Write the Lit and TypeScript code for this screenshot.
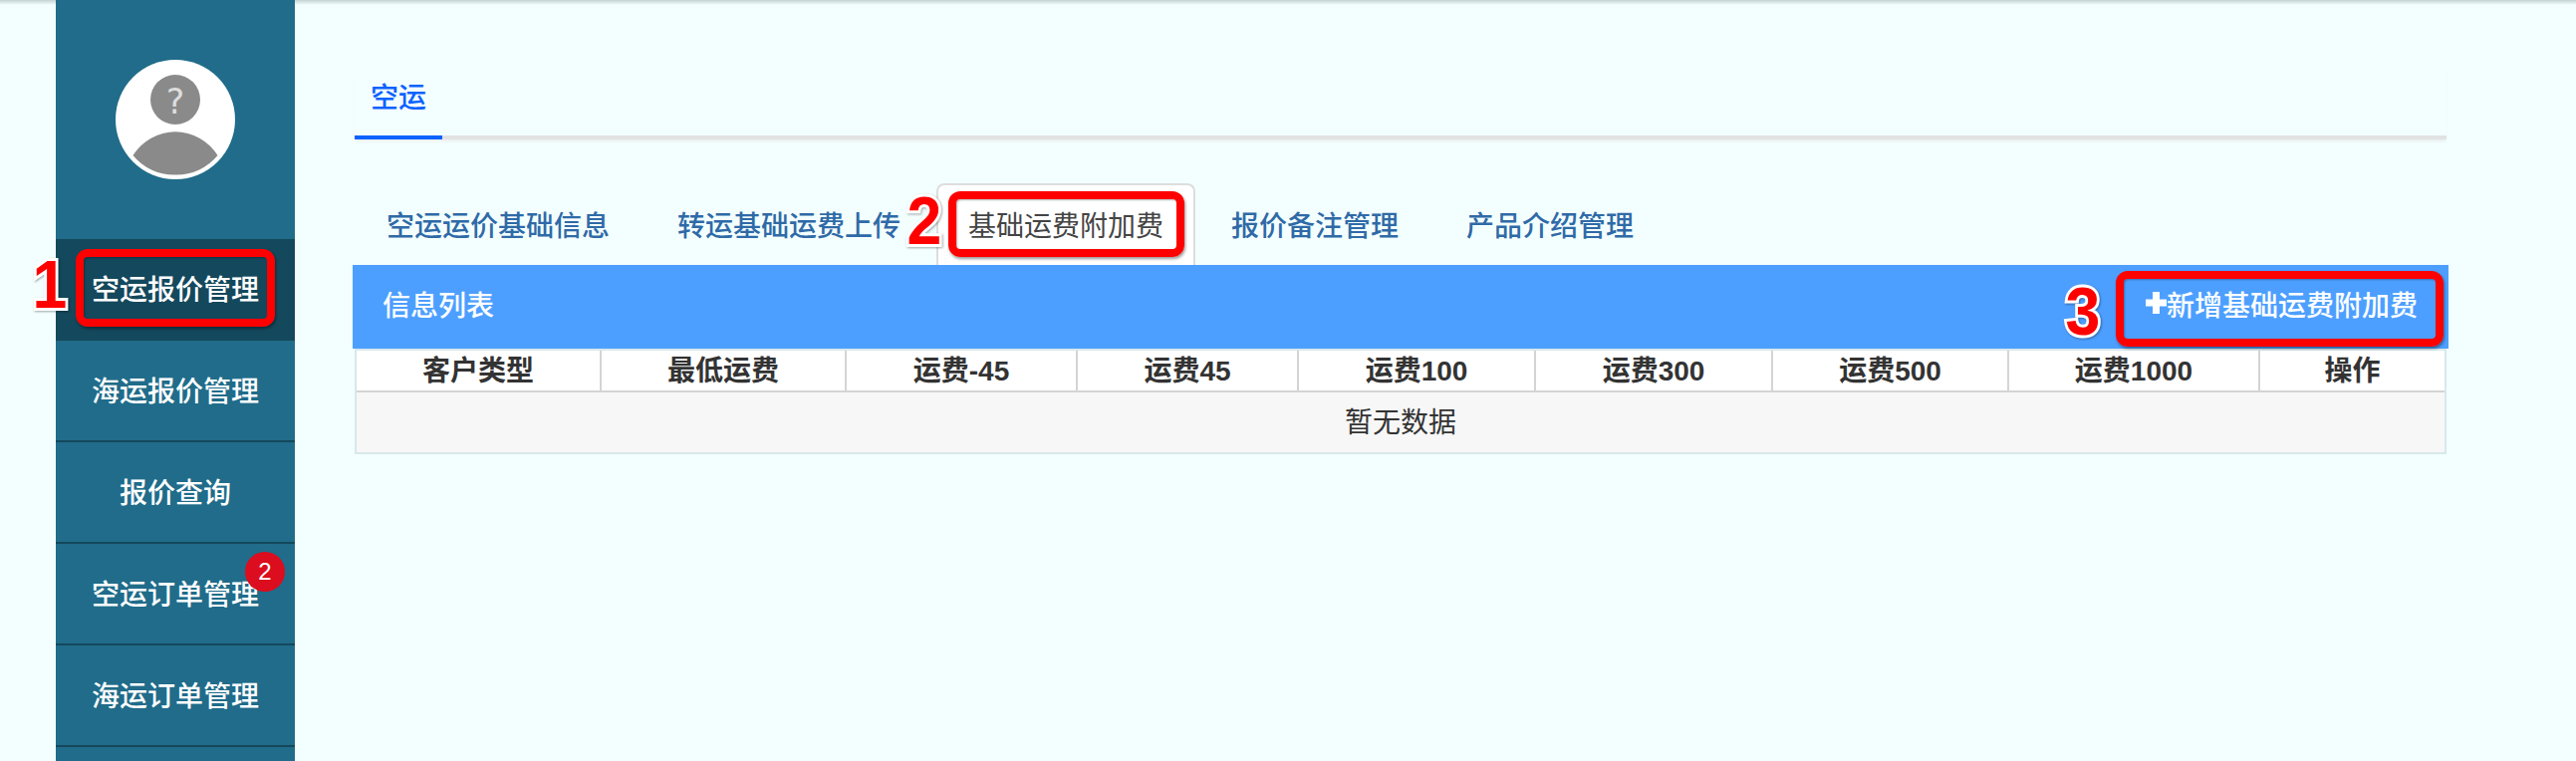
import { LitElement, html, css, svg } from "lit";
import { customElement } from "lit/decorators.js";

const NAV = [
  { label: "空运报价管理", active: true },
  { label: "海运报价管理" },
  { label: "报价查询" },
  { label: "空运订单管理", badge: 2 },
  { label: "海运订单管理" },
  { label: "" },
];
const SUBTABS = [
  { label: "空运运价基础信息" },
  { label: "转运基础运费上传" },
  { label: "基础运费附加费", active: true },
  { label: "报价备注管理" },
  { label: "产品介绍管理" },
];
const COLS = [
  { label: "客户类型", w: 246 },
  { label: "最低运费", w: 246 },
  { label: "运费-45", w: 232 },
  { label: "运费45", w: 222 },
  { label: "运费100", w: 238 },
  { label: "运费300", w: 238 },
  { label: "运费500", w: 237 },
  { label: "运费1000", w: 252 },
  { label: "操作", w: 185 },
];

const avatar = svg`<svg class="avatar" viewBox="0 0 120 120" width="120" height="120">
  <circle cx="60" cy="60" r="60" fill="#fff"></circle>
  <circle cx="60" cy="40" r="25" fill="#8a8a8a"></circle>
  <path d="M17.500 96 A50 50 0 0 1 102.500 96 A53 53 0 0 1 60 115.500 A53 53 0 0 1 17.500 96 Z" fill="#8a8a8a"></path>
  <text x="60" y="54" text-anchor="middle" font-family="'DejaVu Sans', sans-serif" font-size="35" fill="#ddd">?</text>
</svg>`;

@customElement("app-root")
export class AppRoot extends LitElement {
  static styles = css`
    :host {
      display: block;
      position: relative;
      width: 2586px;
      height: 764px;
      overflow: hidden;
      background: linear-gradient(#c4d2d2, #f3ffff 5px);
      font-family: "Liberation Sans", "Noto Sans CJK SC", sans-serif;
      font-size: 28px;
      font-weight: 500;
      color: #333;
    }
    .page {
      display: flex;
      height: 100%;
      padding-left: 56px;
      box-sizing: border-box;
    }
    .side {
      width: 240px;
      flex: none;
      background: #206c8a;
      color: #fff;
    }
    .avatar-wrap {
      height: 240px;
      display: flex;
      justify-content: center;
      padding-top: 60px;
      box-sizing: border-box;
    }
    .nav-item {
      position: relative;
      height: 102px;
      display: flex;
      align-items: center;
      justify-content: center;
      box-sizing: border-box;
      padding-bottom: 3px;
      border-bottom: 2px solid #14485c;
    }
    .nav-item.active {
      background: #14485c;
    }
    .badge {
      position: absolute;
      left: 190px;
      top: 8px;
      width: 40px;
      height: 40px;
      border-radius: 50%;
      background: #dc0d1e;
      color: #fff;
      font-size: 24px;
      font-weight: 400;
      display: flex;
      align-items: center;
      justify-content: center;
    }
    .main {
      width: 2104px;
      margin-left: 58px;
    }
    .top-tabs {
      display: flex;
      margin: 70px 2px 0;
      height: 70px;
      box-sizing: border-box;
      border-bottom: 4px solid #e2e2e2;
      box-shadow: 0 3px 3px -1px #eaeeee;
    }
    .top-tab {
      height: 70px;
      box-sizing: border-box;
      padding: 0 16px 15px;
      display: flex;
      align-items: center;
      color: #0d62ff;
      border-bottom: 4px solid #0d62ff;
    }
    .sub-tabs {
      display: flex;
      margin-top: 44px;
      height: 82px;
    }
    .sub-tab {
      margin: 0 2px;
      padding: 0 30px 3px;
      border: 2px solid transparent;
      border-bottom: 0;
      border-radius: 8px 8px 0 0;
      display: flex;
      align-items: center;
      color: #2f6aa7;
    }
    .sub-tab.active {
      color: #444;
      background: #fff;
      border-color: #ddd;
      font-weight: 400;
    }
    .bar {
      height: 84px;
      background: #4d9fff;
      color: #fff;
      display: flex;
      align-items: center;
      justify-content: space-between;
      padding: 0 31px 6px 30px;
      box-sizing: border-box;
    }
    .add {
      display: flex;
      align-items: center;
    }
    .plus {
      width: 21px;
      height: 22px;
      margin-top: -3px;
      fill: #fff;
    }
    table {
      table-layout: fixed;
      width: 2100px;
      margin: 0 2px;
      border-collapse: separate;
      border-spacing: 0;
      border: 2px solid #d8e8ea;
      line-height: 28px;
    }
    th {
      height: 42px;
      padding: 2px 0 0;
      box-sizing: border-box;
      font-weight: 700;
      background: #fff;
      color: #333;
      border-right: 2px solid #d4d4d4;
      border-bottom: 2px solid #d4d4d4;
    }
    th:last-child {
      border-right: 0;
    }
    td {
      height: 60px;
      padding: 2px 0 0;
      box-sizing: border-box;
      text-align: center;
      background: #f7f7f7;
      color: #333;
      font-weight: 400;
    }
    .mark {
      position: absolute;
      box-sizing: border-box;
      border: 8px solid #ff0000;
      border-radius: 12px;
      box-shadow: 1px 2px 3px rgba(0, 0, 0, 0.4), inset 1px 1px 2px rgba(0, 0, 0, 0.3);
    }
    .m1 { left: 76px; top: 250px; width: 200px; height: 78px; }
    .m2 { left: 952px; top: 192px; width: 237px; height: 66px; }
    .m3 { left: 2124px; top: 272px; width: 329px; height: 76px; }
    .num {
      position: absolute;
      font-size: 68px;
      line-height: 1;
      font-weight: 700;
      color: #f00;
      -webkit-text-stroke: 6px #fff;
      paint-order: stroke fill;
      transform: scaleX(0.92);
      filter: drop-shadow(1px 1px 1px rgba(0, 0, 0, 0.35));
    }
    .n1 { left: 31px; top: 251px; }
    .n2 { left: 909px; top: 187px; }
    .n3 { left: 2072px; top: 278px; }
  `;

  render() {
    return html`
      <div class="page">
        <aside class="side">
          <div class="avatar-wrap">${avatar}</div>
          ${NAV.map(
            (n) => html`<div class="nav-item ${n.active ? "active" : ""}">
              ${n.label}${n.badge ? html`<span class="badge">${n.badge}</span>` : ""}
            </div>`
          )}
        </aside>
        <main class="main">
          <div class="top-tabs"><div class="top-tab">空运</div></div>
          <div class="sub-tabs">
            ${SUBTABS.map(
              (t) => html`<div class="sub-tab ${t.active ? "active" : ""}">${t.label}</div>`
            )}
          </div>
          <div class="bar">
            <span>信息列表</span>
            <span class="add">
              <svg class="plus" viewBox="0 0 21 22"><path d="M7 0h7v7.500h7v7h-7V22H7v-7.500H0v-7h7z"></path></svg>
              新增基础运费附加费
            </span>
          </div>
          <table>
            <colgroup>${COLS.map((c) => html`<col style="width:${c.w}px" />`)}</colgroup>
            <thead>
              <tr>${COLS.map((c) => html`<th>${c.label}</th>`)}</tr>
            </thead>
            <tbody>
              <tr><td colspan=${COLS.length}>暂无数据</td></tr>
            </tbody>
          </table>
        </main>
      </div>
      <div class="mark m1"></div>
      <div class="mark m2"></div>
      <div class="mark m3"></div>
      <span class="num n1">1</span>
      <span class="num n2">2</span>
      <span class="num n3">3</span>
    `;
  }
}
